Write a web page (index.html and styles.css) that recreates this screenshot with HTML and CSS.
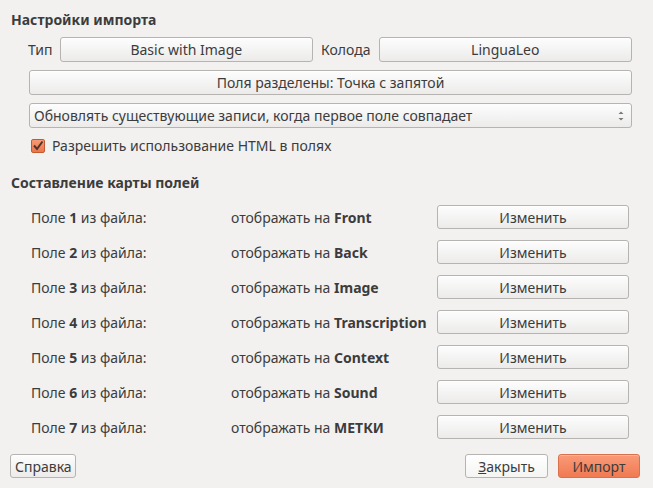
FILE: index.html
```html
<!DOCTYPE html>
<html lang="ru">
<head>
<meta charset="utf-8">
<title>Импорт</title>
<link rel="stylesheet" href="styles.css">
</head>
<body>
<div class="dialog">
  <div class="section-title">Настройки импорта</div>
  <div class="settings">
    <div class="row-type">
      <span class="lbl">Тип</span>
      <button class="btn grow">Basic with Image</button>
      <span class="lbl deck">Колода</span>
      <button class="btn grow">LinguaLeo</button>
    </div>
    <button class="btn full">Поля разделены: Точка с запятой</button>
    <div class="combo">
      <span>Обновлять существующие записи, когда первое поле совпадает</span>
      <svg class="spin" width="8" height="14" viewBox="0 0 8 14"><path d="M1.5 5 L4 2.5 L6.5 5 Z" fill="#7a7876"/><path d="M1.5 9 L4 11.5 L6.5 9 Z" fill="#7a7876"/></svg>
    </div>
    <label class="check">
      <span class="box"><svg width="14" height="14" viewBox="0 0 14 14"><path d="M3 6.5 L6 10 L11.5 2.5" fill="none" stroke="#4b3530" stroke-width="2"/></svg></span>
      <span>Разрешить использование HTML в полях</span>
    </label>
  </div>
  <div class="section-title second">Составление карты полей</div>
  <div class="map">
    <div class="map-row"><span>Поле <b>1</b> из файла:</span><span>отображать на <b>Front</b></span><button class="btn">Изменить</button></div>
    <div class="map-row"><span>Поле <b>2</b> из файла:</span><span>отображать на <b>Back</b></span><button class="btn">Изменить</button></div>
    <div class="map-row"><span>Поле <b>3</b> из файла:</span><span>отображать на <b>Image</b></span><button class="btn">Изменить</button></div>
    <div class="map-row"><span>Поле <b>4</b> из файла:</span><span>отображать на <b>Transcription</b></span><button class="btn">Изменить</button></div>
    <div class="map-row"><span>Поле <b>5</b> из файла:</span><span>отображать на <b>Context</b></span><button class="btn">Изменить</button></div>
    <div class="map-row"><span>Поле <b>6</b> из файла:</span><span>отображать на <b>Sound</b></span><button class="btn">Изменить</button></div>
    <div class="map-row"><span>Поле <b>7</b> из файла:</span><span>отображать на <b>МЕТКИ</b></span><button class="btn">Изменить</button></div>
  </div>
  <div class="footer">
    <button class="btn help">Справка</button>
    <div class="spacer"></div>
    <button class="btn close"><u>З</u>акрыть</button>
    <button class="btn primary">Импорт</button>
  </div>
</div>
</body>
</html>
```

FILE: styles.css
```css
html, body {
  margin: 0;
  padding: 0;
  background: #f2f1f0;
}
body {
  width: 653px;
  height: 488px;
  overflow: hidden;
  font-family: "Noto Sans", "Open Sans", "DejaVu Sans", sans-serif;
  font-size: 14px;
  line-height: 17px;
  color: #3c3c3c;
}
.dialog {
  padding: 11px 21px 0 11px;
  display: flex;
  flex-direction: column;
}
.section-title {
  font-weight: bold;
  height: 17px;
  line-height: 17px;
}
.section-title.second {
  margin-top: 20px;
}
.settings {
  padding: 9px 0 0 18px;
  display: flex;
  flex-direction: column;
  gap: 8px;
}
.btn {
  font-family: inherit;
  font-size: 14px;
  color: #3c3c3c;
  height: 25px;
  padding: 0 4px;
  border: 1px solid #b6b4b1;
  border-radius: 3px;
  background: linear-gradient(#fdfdfd, #ecebea);
  box-shadow: inset 0 1px 0 #ffffff;
  line-height: 22px;
  text-align: center;
  cursor: default;
}
.row-type {
  display: flex;
  align-items: center;
  margin-left: -1px;
}
.lbl {
  padding: 0 7px 0 0;
}
.lbl.deck {
  padding: 0 8px 0 8px;
}
.grow {
  flex: 1;
}
.full {
  width: 100%;
}
.combo {
  height: 25px;
  box-sizing: border-box;
  border: 1px solid #b6b4b1;
  border-radius: 3px;
  background: linear-gradient(#fdfdfd, #ecebea);
  display: flex;
  align-items: center;
  justify-content: space-between;
  padding: 0 6px 0 4px;
}
.spin {
  display: block;
}
.check {
  display: flex;
  align-items: center;
  gap: 7px;
  margin-top: 1px;
  padding-left: 2px;
}
.box {
  width: 14px;
  height: 14px;
  box-sizing: border-box;
  border: 1px solid #c6582f;
  border-radius: 2px;
  background: linear-gradient(#f79a74, #ec7649);
  position: relative;
}
.box svg {
  position: absolute;
  left: -1px;
  top: -1px;
}
.map {
  padding: 14px 0 0 20px;
  display: flex;
  flex-direction: column;
  gap: 11px;
}
.map-row {
  display: grid;
  grid-template-columns: 200px 206px 192px;
  align-items: center;
  height: 24px;
}
.map-row .btn {
  height: 24px;
  line-height: 21px;
}
.footer {
  display: flex;
  align-items: center;
  margin-top: 15px;
  margin-left: -1px;
  margin-right: -8px;
  gap: 10px;
}
.footer .btn {
  height: 24px;
  line-height: 21px;
}
.help {
  width: 66px;
}
.spacer {
  flex: 1;
}
.close {
  width: 83px;
  background: linear-gradient(#ffffff, #f4f4f3);
}
.primary {
  width: 82px;
  border-color: #d9714c;
  background: linear-gradient(#fa9a78, #f07a52);
  box-shadow: inset 0 1px 0 #fcb59c;
}
u {
  text-decoration: underline;
}
```
